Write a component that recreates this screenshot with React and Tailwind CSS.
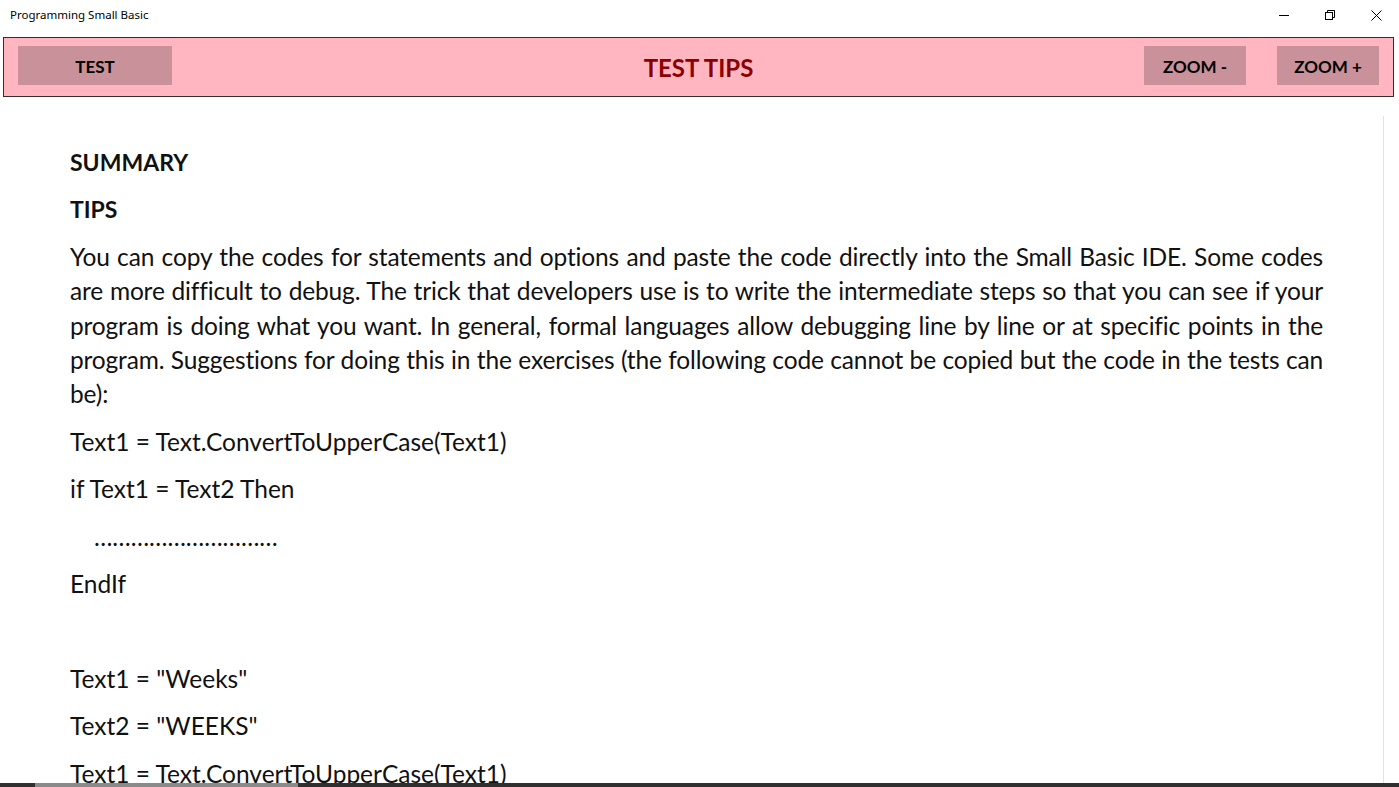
import React from 'react';

const Btn = ({ children, className }) => (
    <button className={`h-[39px] bg-[#c9919a] text-[17px] font-bold text-black pt-[2px] ${className}`}>{children}</button>
);

const P = ({ children, className = '' }) => (
    <p className={`mb-[13px] leading-[34.4px] ${className}`}>{children}</p>
);

const tipLines = [
    'You can copy the codes for statements and options and paste the code directly into the Small Basic IDE. Some codes',
    'are more difficult to debug. The trick that developers use is to write the intermediate steps so that you can see if your',
    'program is doing what you want. In general, formal languages allow debugging line by line or at specific points in the',
    'program. Suggestions for doing this in the exercises (the following code cannot be copied but the code in the tests can',
];

const App = () => {
    return (
        <div className="w-[1399px] h-[787px] bg-white overflow-hidden flex flex-col" style={{ fontFamily: 'Lato, sans-serif' }}>
            <div className="h-[30px] flex items-center justify-between shrink-0">
                <span className="pl-[10px] text-[11.5px] text-black" style={{ fontFamily: '"Noto Sans", sans-serif' }}>Programming Small Basic</span>
                <div className="flex h-full">
                    <div className="w-[46px] flex items-center justify-center">
                        <svg width="10" height="10" viewBox="0 0 10 10"><path d="M0 5.5h10" stroke="#000" strokeWidth="1" /></svg>
                    </div>
                    <div className="w-[46px] flex items-center justify-center">
                        <svg width="10" height="10" viewBox="0 0 10 10" fill="none" stroke="#000" strokeWidth="1">
                            <rect x="0.5" y="2.5" width="7" height="7" />
                            <path d="M2.5 2.5v-2h7v7h-2" />
                        </svg>
                    </div>
                    <div className="w-[46px] flex items-center justify-center">
                        <svg width="11" height="11" viewBox="0 0 11 11"><path d="M0.5 0.5l10 10M10.5 0.5l-10 10" stroke="#000" strokeWidth="1" /></svg>
                    </div>
                </div>
            </div>
            <div className="px-[3px] pt-[7px] shrink-0">
                <div className="h-[60px] w-[1391px] bg-[#ffb6c1] border border-[#3a2a2c] grid grid-cols-[1fr_auto_1fr] items-start pt-[8px] px-[14px]">
                    <div className="flex">
                        <Btn className="w-[154px]">TEST</Btn>
                    </div>
                    <div className="text-center text-[24px] font-bold text-[#8b0000] pt-[4px]">TEST TIPS</div>
                    <div className="flex justify-end">
                        <Btn className="w-[102px]">ZOOM -</Btn>
                        <Btn className="w-[102px] ml-[31px]">ZOOM +</Btn>
                    </div>
                </div>
            </div>
            <div className="flex-1 flex min-h-0">
                <div className="flex-1 overflow-hidden pl-[70px] pr-[60px] pt-[48px] text-[24.5px] text-[#111]">
                    <P className="font-bold text-[23px]">SUMMARY</P>
                    <P className="font-bold text-[23px]">TIPS</P>
                    <div className="mb-[13px] leading-[34.4px] tracking-[-0.15px]">
                        {tipLines.map((line) => (
                            <div key={line} className="whitespace-nowrap text-justify [text-align-last:justify]">{line}</div>
                        ))}
                        <div>be):</div>
                    </div>
                    <P>Text1 = Text.ConvertToUpperCase(Text1)</P>
                    <P>if Text1 = Text2 Then</P>
                    <P className="pl-[24px]">…………………………</P>
                    <P>EndIf</P>
                    <P>&nbsp;</P>
                    <P>Text1 = "Weeks"</P>
                    <P>Text2 = "WEEKS"</P>
                    <P>Text1 = Text.ConvertToUpperCase(Text1)</P>
                </div>
                <div className="w-[16px] shrink-0 pt-[19px] flex">
                    <div className="w-px bg-[#e2e2e2] h-full" />
                </div>
            </div>
            <div className="h-[4px] shrink-0 bg-[#2f2f2f] flex">
                <div className="ml-[35px] w-[263px] h-full bg-[#8a8a8a]" />
            </div>
        </div>
    );
};

export default App;
